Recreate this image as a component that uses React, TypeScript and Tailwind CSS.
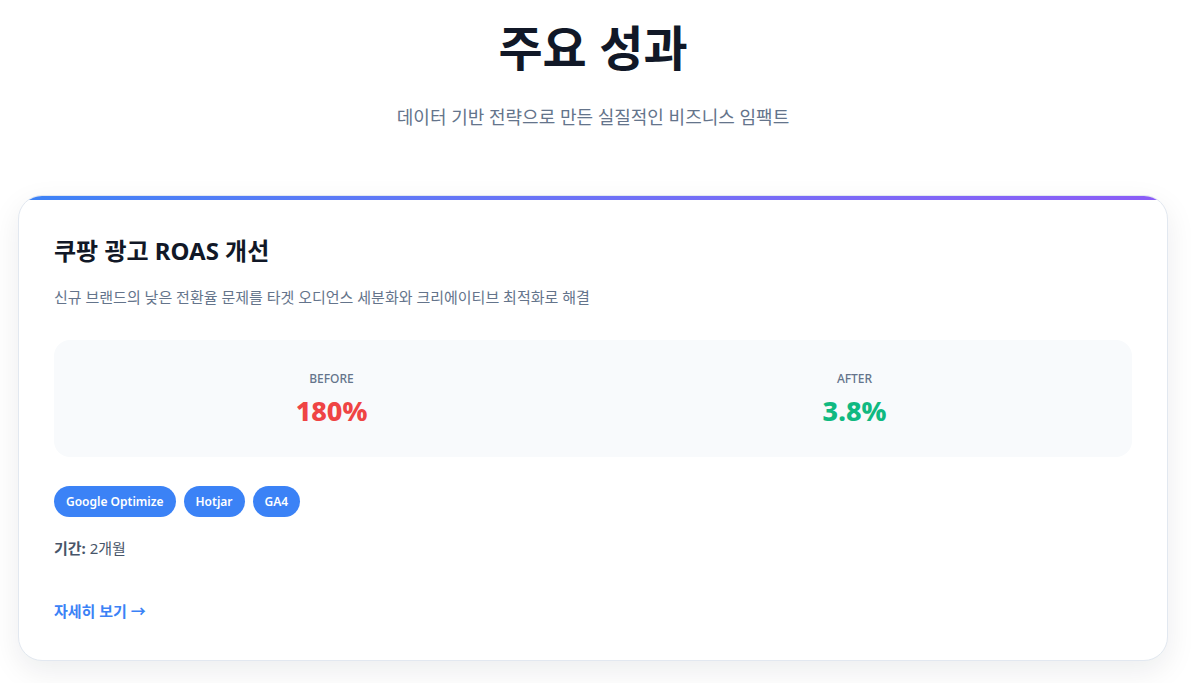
export default function App() {
  const tags = ["Google Optimize", "Hotjar", "GA4"];

  return (
    <main
      className="min-h-screen bg-white pl-[18px] pr-[23px] pt-[18px] pb-6"
      style={{ fontFamily: '"Noto Sans", "Noto Sans CJK KR", sans-serif' }}
    >
      <div className="text-center">
        <h1 className="text-[48px] leading-[60px] font-bold text-[#111827]">주요 성과</h1>
        <p className="mt-[25px] text-[18px] leading-[28px] text-[#64748b]">
          데이터 기반 전략으로 만든 실질적인 비즈니스 임팩트
        </p>
      </div>

      <section className="mt-[64px] rounded-[24px] border border-[#e2e8f0] bg-white overflow-hidden shadow-[0_10px_30px_rgba(15,23,42,0.08)]">
        <div className="h-1 bg-gradient-to-r from-[#3b82f6] to-[#8b5cf6]" />
        <div className="px-[35px] pt-[35px] pb-[37px]">
          <h2 className="text-[24px] leading-[32px] font-bold text-[#111827]">쿠팡 광고 ROAS 개선</h2>
          <p className="mt-[18px] text-[15px] leading-[24px] text-[#64748b]">
            신규 브랜드의 낮은 전환율 문제를 타겟 오디언스 세분화와 크리에이티브 최적화로 해결
          </p>

          <div className="mt-[31px] grid grid-cols-2 gap-8 rounded-[16px] bg-[#f8fafc] px-8 pt-[31px] pb-[27px]">
            <div className="text-center">
              <div className="text-[12px] leading-[16px] font-medium uppercase text-[#64748b]">Before</div>
              <div className="mt-[5px] text-[27px] leading-[38px] font-extrabold text-[#ef4444]">180%</div>
            </div>
            <div className="text-center">
              <div className="text-[12px] leading-[16px] font-medium uppercase text-[#64748b]">After</div>
              <div className="mt-[5px] text-[27px] leading-[38px] font-extrabold text-[#10b981]">3.8%</div>
            </div>
          </div>

          <div className="mt-[29px] flex gap-2">
            {tags.map((t) => (
              <span
                key={t}
                className="rounded-full bg-[#3b82f6] px-3 h-[31px] flex items-center text-[12px] font-semibold text-white"
              >
                {t}
              </span>
            ))}
          </div>

          <p className="mt-[19px] text-[15px] leading-[24px] text-[#475569]">
            <span className="font-bold">기간:</span> 2개월
          </p>

          <a href="#" className="mt-[39px] inline-block text-[15px] leading-[24px] font-semibold text-[#3b82f6]">
            자세히 보기 →
          </a>
        </div>
      </section>
    </main>
  );
}
